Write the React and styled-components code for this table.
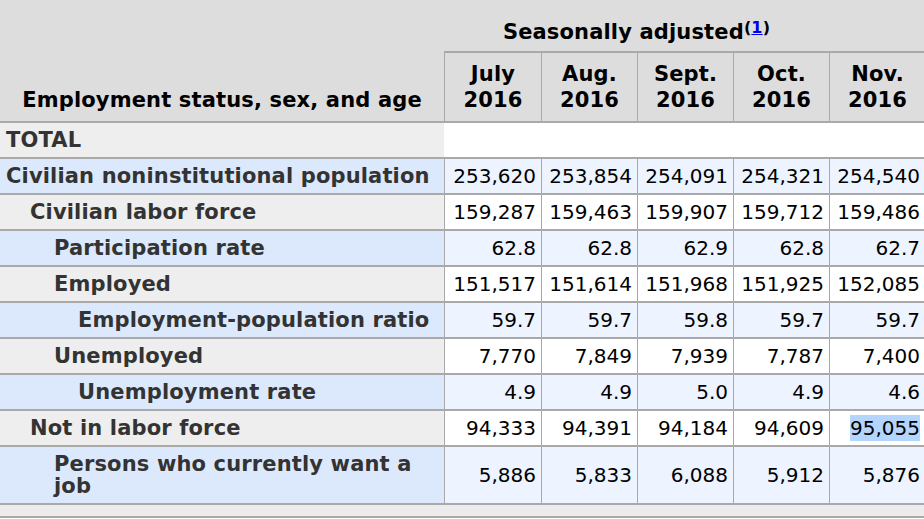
import React from "react";
import styled, { createGlobalStyle } from "styled-components";

const GlobalStyle = createGlobalStyle`
  html, body {
    margin: 0;
    padding: 0;
    overflow: hidden;
    background: #ffffff;
  }
  body {
    font-family: "DejaVu Sans", Verdana, sans-serif;
  }
`;

const COLS = "444px 97px 96px 96px 96px 96px";
const LINE = "#a9a9a9";

const Page = styled.div`
  width: 924px;
  height: 519px;
  overflow: hidden;
`;

const Table = styled.div`
  width: 925px;
  display: flex;
  flex-direction: column;
  font-family: "DejaVu Sans", Verdana, sans-serif;
  font-size: 20px;
`;

const Head = styled.div`
  display: grid;
  grid-template-columns: ${COLS};
  grid-template-rows: 53px 70px;
  background: #dddddd;
  color: #000;
  font-weight: bold;
  font-size: 21px;
  letter-spacing: 0.15px;
`;

const StubHead = styled.div`
  grid-row: 1 / span 2;
  grid-column: 1;
  display: flex;
  align-items: flex-end;
  justify-content: center;
  padding-bottom: 8px;
  line-height: 26px;
  border-bottom: 2px solid ${LINE};
`;

const GroupHead = styled.div`
  grid-row: 1;
  grid-column: 2 / span 5;
  display: flex;
  align-items: flex-end;
  justify-content: center;
  padding-right: 96px;
  padding-bottom: 7px;
  line-height: 24px;
  border-bottom: 2px solid ${LINE};
`;

const Sup = styled.span`
  font-size: 16px;
  line-height: 0;
  vertical-align: 6px;
`;

const FootLink = styled.a`
  color: #0000ee;
  text-decoration: underline;
`;

const MonthHead = styled.div`
  grid-row: 2;
  display: flex;
  align-items: flex-end;
  justify-content: center;
  text-align: center;
  padding-bottom: 8px;
  line-height: 26px;
  border-left: 1px solid ${LINE};
  border-bottom: 2px solid ${LINE};
`;

const Row = styled.div`
  display: grid;
  grid-template-columns: ${COLS};
  height: ${(p) => (p.$tall ? 58 : 36)}px;
`;

const LabelCell = styled.div`
  display: flex;
  align-items: center;
  padding-left: ${(p) => 6 + p.$level * 24}px;
  padding-right: 6px;
  font-weight: bold;
  font-size: 21px;
  letter-spacing: 0.15px;
  color: #333333;
  line-height: 22px;
  background: ${(p) => (p.$blue ? "#dce9fc" : "#eeeeee")};
  border-bottom: 2px solid ${LINE};
`;

const EmptySpan = styled.div`
  grid-column: 2 / span 5;
  background: #ffffff;
  border-bottom: 2px solid ${LINE};
`;

const DataCell = styled.div`
  display: flex;
  align-items: center;
  justify-content: flex-end;
  padding-right: 5px;
  color: #000;
  background: ${(p) => (p.$blue ? "#edf4ff" : "#ffffff")};
  border-left: 1px solid ${LINE};
  border-bottom: 2px solid ${LINE};
`;

const Selected = styled.span`
  background: #b4d5fe;
  padding: 1px 0;
`;

const Footer = styled.div`
  height: 11px;
  background: #ececec;
  border-bottom: 2px solid ${LINE};
`;

const months = [
  ["July", "2016"],
  ["Aug.", "2016"],
  ["Sept.", "2016"],
  ["Oct.", "2016"],
  ["Nov.", "2016"],
];

const rows = [
  { label: "Civilian noninstitutional population", level: 0, values: ["253,620", "253,854", "254,091", "254,321", "254,540"] },
  { label: "Civilian labor force", level: 1, values: ["159,287", "159,463", "159,907", "159,712", "159,486"] },
  { label: "Participation rate", level: 2, values: ["62.8", "62.8", "62.9", "62.8", "62.7"] },
  { label: "Employed", level: 2, values: ["151,517", "151,614", "151,968", "151,925", "152,085"] },
  { label: "Employment-population ratio", level: 3, values: ["59.7", "59.7", "59.8", "59.7", "59.7"] },
  { label: "Unemployed", level: 2, values: ["7,770", "7,849", "7,939", "7,787", "7,400"] },
  { label: "Unemployment rate", level: 3, values: ["4.9", "4.9", "5.0", "4.9", "4.6"] },
  { label: "Not in labor force", level: 1, values: ["94,333", "94,391", "94,184", "94,609", "95,055"], selected: 4 },
  { label: "Persons who currently want a job", level: 2, values: ["5,886", "5,833", "6,088", "5,912", "5,876"], tall: true },
];

export default function App() {
  return (
    <Page>
      <GlobalStyle />
      <Table>
        <Head>
          <StubHead>Employment status, sex, and age</StubHead>
          <GroupHead>
            <span>
              Seasonally adjusted
              <Sup>
                (<FootLink href="#note1">1</FootLink>)
              </Sup>
            </span>
          </GroupHead>
          {months.map(([m, y]) => (
            <MonthHead key={m}>
              {m}
              <br />
              {y}
            </MonthHead>
          ))}
        </Head>
        <Row>
          <LabelCell $level={0}>TOTAL</LabelCell>
          <EmptySpan />
        </Row>
        {rows.map((r, i) => {
          const blue = i % 2 === 0;
          return (
            <Row key={r.label} $tall={r.tall}>
              <LabelCell $level={r.level} $blue={blue}>
                {r.label}
              </LabelCell>
              {r.values.map((v, j) => (
                <DataCell key={j} $blue={blue}>
                  {r.selected === j ? <Selected>{v}</Selected> : v}
                </DataCell>
              ))}
            </Row>
          );
        })}
        <Footer />
      </Table>
    </Page>
  );
}
